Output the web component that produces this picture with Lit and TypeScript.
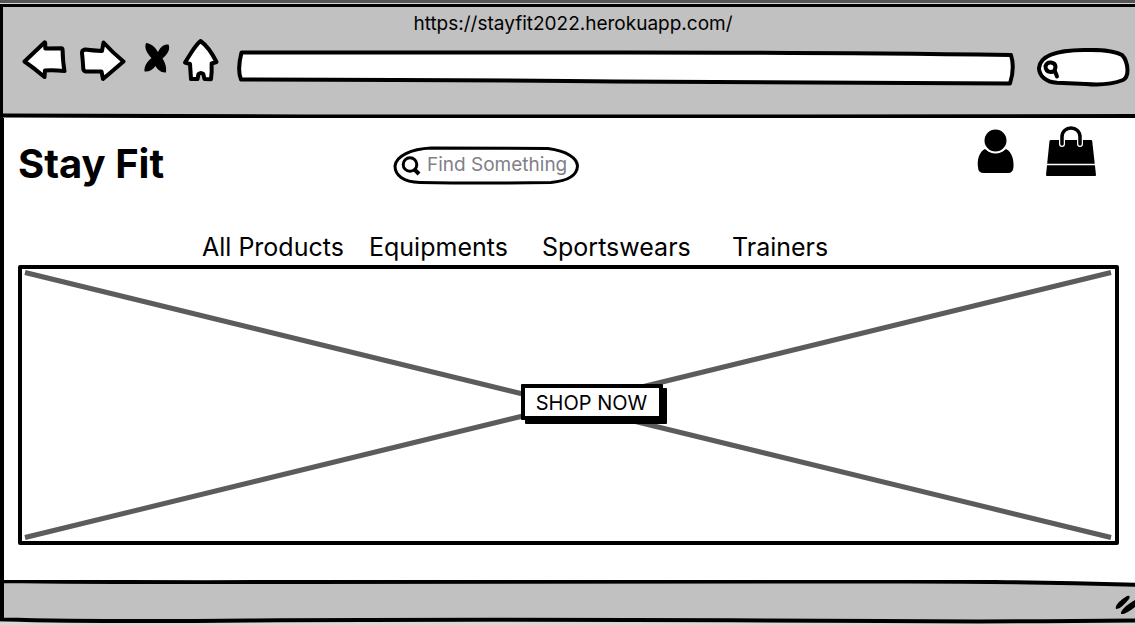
import { LitElement, html, css } from "lit";
import { customElement } from "lit/decorators.js";

@customElement("browser-bar")
class BrowserBar extends LitElement {
  static styles = css`
    :host { display: block; }
    svg { display: block; fill: #fff; stroke: #000; stroke-width: 4; stroke-linejoin: round; stroke-linecap: round; }
    .chrome { background: #c1c1c1; border-top: 3px solid #000; border-left: 3px solid #000; padding-top: 3px; }
    .title { font-size: 19px; line-height: 28px; text-align: center; padding-left: 8px; }
    .tools { display: flex; align-items: flex-end; height: 50px; padding: 0 5px 0 19px; }
    .actions { display: flex; align-self: flex-start; gap: 10px; }
    button { border: 0; padding: 0; background: none; cursor: pointer; }
    .solid { fill: #000; stroke: none; }
    .address, .find { display: grid; height: 40px; }
    .address > *, .find > * { grid-area: 1 / 1; min-width: 0; }
    .address { flex: 1; margin: 0 20px 0 16px; }
    .find { width: 94px; }
    .address svg, .find svg { width: 100%; height: 40px; }
    input { background: none; border: 0; outline: 0; font: inherit; font-size: 16px; width: 100%; box-sizing: border-box; padding: 0 12px; }
    .find input { padding: 0 12px 0 26px; }
    .edge { width: 100%; height: 6px; margin-top: 24px; }
    .under { fill: #fff; stroke: none; }
    .line { fill: none; stroke-width: 4; }
  `;
  render() {
    return html`
      <header class="chrome">
        <div class="title">https://stayfit2022.herokuapp.com/</div>
        <div class="tools">
          <div class="actions">
            <button aria-label="Back"><svg width="46" height="44"><path d="M2.500 23.500L22.500 4.500Q23 4 23.200 5L23.300 10.500L39.500 10.200Q40.500 10.200 40.600 12Q40.800 24 42.500 33Q32 32 23 32.500L22.500 39Q12 30 2.500 23.500Z"/></svg></button>
            <button aria-label="Forward"><svg width="48" height="44"><path d="M7 11.500Q15 12.500 24 13L25.500 4.500Q34 14 45.500 23.500L25 41L23.500 33.500L8 33.500Q5.500 33 5.300 31Q4.800 22 4 15Q4 12 7 11.500Z"/></svg></button>
            <button aria-label="Stop"><svg width="36" height="44"><path class="solid" d="M10 5C15 5.500 19 9 22 14C25 8 28 6.500 32.500 6.500C34.500 11 32 16 26.500 20.500C30 26 30.500 30 30 34.500C25 35 21 31 19.500 28C16 32 13 34 8.500 33.500C8 28 11 24 15.500 20C11 15 8 10 10 5Z"/></svg></button>
            <button aria-label="Home"><svg width="38" height="44"><path d="M18.500 3Q14 7 9 15L3 24.500L8 26L9 41L15.500 41L16.500 36Q19 34 21.300 36L22.500 41L29 41.300Q30 34 29.600 25.500L34.500 24Q27 9 18.500 3Z"/></svg></button>
          </div>
          <label class="address">
            <svg viewBox="0 0 780 40" preserveAspectRatio="none"><path vector-effect="non-scaling-stroke" d="M5.500 4.500L390 4.500Q560 4.500 775 7Q779 20 774 35.500Q500 34.500 380 33.500Q260 32 5 31.500Q1 22 5.500 4.500Z"/></svg>
            <input aria-label="Address">
          </label>
          <label class="find">
            <svg viewBox="0 0 94 40"><path d="M21 34.800C9 34 3 27 3 20C4 7 21 2.200 48 2C65 1.500 80 3.500 86 7Q91 12 91.500 22Q91.500 30 87 32C78 35.500 66 37.500 50 36L21 34.800Z"/><path d="M9.500 18Q11 14 15 14.500Q19.500 15 19.500 19Q19 24 14.500 24Q9.500 23.500 9.500 18ZM18.500 22L21 28.500"/></svg>
            <input aria-label="Browser search">
          </label>
        </div>
        <svg class="edge" viewBox="0 0 1132 6" preserveAspectRatio="none"><path class="under" d="M0 3Q100 4 300 4.500L800 4.500L1132 4V6H0Z"/><path class="line" vector-effect="non-scaling-stroke" d="M0 3.500Q100 4.500 300 4.500L800 4.500L1132 4"/></svg>
      </header>`;
  }
}

@customElement("store-page")
class StorePage extends LitElement {
  static styles = css`
    :host { display: flex; flex-direction: column; flex: 1; border-left: 4px solid #000; background: #fff; padding: 6px 16px 35px 14px; }
    svg { display: block; }
    a { color: inherit; text-decoration: none; }
    .top { display: grid; grid-template-columns: 375px 186px 1fr; height: 105px; }
    h1 { margin: 16px 0 0; font-size: 40px; line-height: 48px; font-weight: 700; }
    .search { display: grid; height: 40px; margin-top: 22px; }
    .search > * { grid-area: 1 / 1; min-width: 0; }
    .search svg { width: 100%; height: 40px; fill: #fff; stroke: #000; stroke-width: 3; }
    input { border: 0; outline: 0; background: none; font: inherit; font-size: 19px; width: 100%; box-sizing: border-box; padding: 0 4px 4px 34px; }
    input::placeholder { color: #808088; opacity: 1; }
    .account { display: flex; justify-content: flex-end; gap: 30px; padding-right: 22px; }
    .nav { display: grid; grid-template-columns: 167px 173px 190px auto; padding-left: 184px; font-size: 25px; line-height: 36px; height: 36px; white-space: nowrap; }
    .hero { display: grid; flex: 1; }
    .hero > * { grid-area: 1 / 1; }
    .frame { border: 4px solid #000; border-radius: 2px; display: grid; min-height: 0; }
    .frame svg { width: 100%; height: 100%; min-height: 160px; }
    .frame path { stroke: #5c5c5c; stroke-width: 5; }
    .shop { place-self: center; margin: 0 0 6px 46px; font: inherit; font-size: 20px; line-height: 24px; color: #000; background: #fff; border: 4px solid #000; border-radius: 1px; box-shadow: 4px 4px 0 #000; padding: 2px 0 0; width: 142px; height: 36px; white-space: nowrap; }
  `;
  render() {
    return html`
      <div class="top">
        <h1>Stay Fit</h1>
        <label class="search">
          <svg viewBox="0 0 186 40" preserveAspectRatio="none"><path d="M38 2L155 2.500C174 5 184 12 184.500 20C184 30 174 35 158 36.500Q90 37.500 27 36.500C10 36 2 29 2 20C3 10 18 3 38 2Z"/><circle cx="17" cy="18.500" r="6.800"/><path d="M21.500 23.500L26 28" stroke-width="4"/></svg>
          <input type="text" placeholder="Find Something" aria-label="Find Something">
        </label>
        <div class="account">
          <a href="#account" aria-label="Account"><svg width="38" height="54"><path d="M8 25Q18.500 33 29 25C35 28 37 36 36.500 43Q36 49 31 49H7Q1 49 1 43C0 36 2 28 8 25Z"/><circle cx="18.500" cy="16.500" r="12" stroke="#fff" stroke-width="2"/></svg></a>
          <a href="#bag" aria-label="Bag"><svg width="52" height="54"><path d="M6 16H46Q47 16 47.200 17L51 51Q51 52 50 52H2Q1 52 1 51L4.500 17Q4.700 16 6 16Z"/><path d="M0 40.500H52" stroke="#fff" stroke-width="1.500"/><path d="M17 20V13C17 1 35 1 35 13V20" fill="none" stroke="#fff" stroke-width="6" stroke-linecap="round"/><path d="M17 20V13C17 1 35 1 35 13V20" fill="none" stroke="#000" stroke-width="3.500" stroke-linecap="round"/></svg></a>
        </div>
      </div>
      <nav class="nav">
        <a href="#all">All Products</a><a href="#equipments">Equipments</a><a href="#sportswears">Sportswears</a><a href="#trainers">Trainers</a>
      </nav>
      <section class="hero">
        <div class="frame"><svg viewBox="0 0 1094 272" preserveAspectRatio="none"><path vector-effect="non-scaling-stroke" d="M3 3.500L1090 268.500M3 268.500L1090 3.500"/></svg></div>
        <button class="shop">SHOP NOW</button>
      </section>`;
  }
}

@customElement("app-root")
class AppRoot extends LitElement {
  static styles = css`
    :host { display: flex; flex-direction: column; min-height: 100vh; box-sizing: border-box; border-top: 3px solid #555; background: #d8d8d8; color: #000; font-family: Inter, sans-serif; padding-top: 1px; }
    .status { display: grid; grid-template-columns: 1fr 20px; height: 45px; background: #fff; }
    .status > * { grid-row: 1; }
    .bar { grid-column: 1 / 3; width: 100%; height: 45px; display: block; stroke: #000; stroke-width: 4; }
    .grip { grid-column: 2; width: 20px; height: 45px; stroke: none; }
  `;
  render() {
    return html`
      <browser-bar></browser-bar>
      <store-page></store-page>
      <footer class="status">
        <svg class="bar" viewBox="0 0 1135 45" preserveAspectRatio="none"><path d="M0 42H1135V45H0Z" fill="#d8d8d8" stroke="none"/><path vector-effect="non-scaling-stroke" fill="#c1c1c1" d="M2 -3V1Q100 2.500 300 2L880 1.500Q1000 1 1140 5V40.500Q1000 42 880 41Q500 39 250 40.500Q100 42 2 39.500V1"/></svg>
        <svg class="grip" viewBox="0 0 20 45"><path d="M1 29Q-1 24 12 16Q16 15 14 19Q6 29 1 29ZM6 34Q5 29 20 20V27Q10 35 6 34Z"/></svg>
      </footer>`;
  }
}
